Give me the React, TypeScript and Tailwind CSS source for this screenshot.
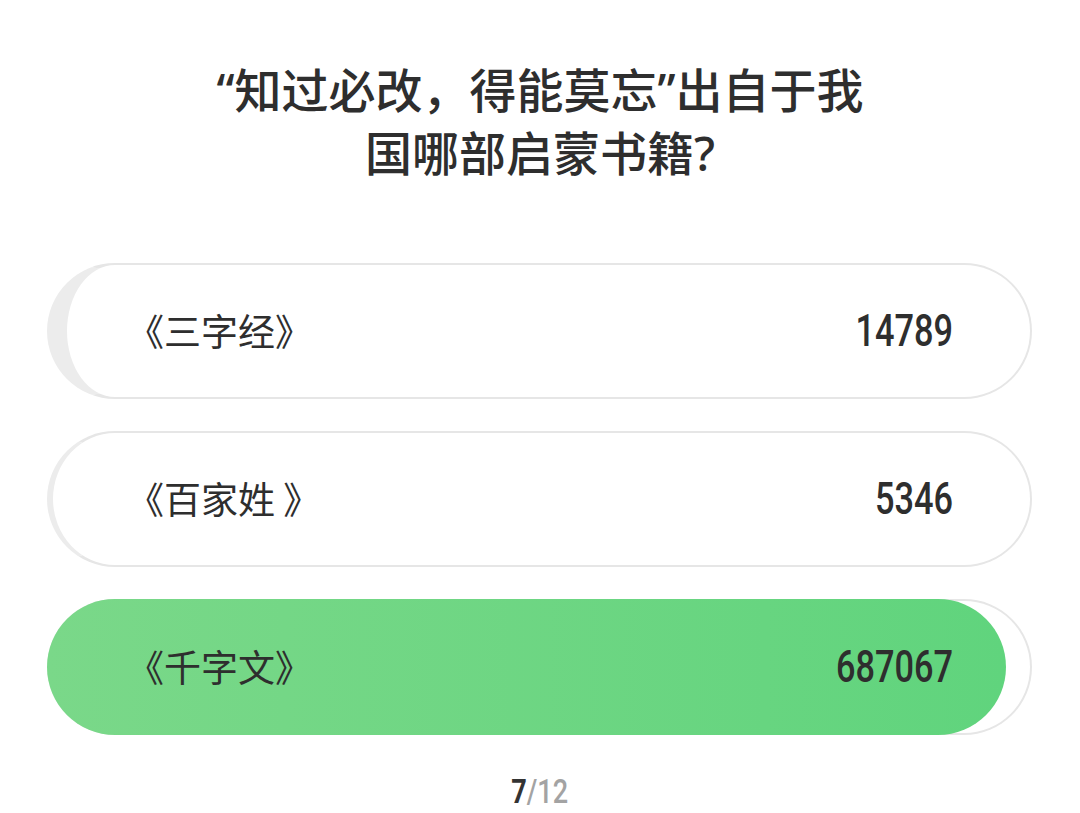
const options = [
  { label: '《三字经》', count: '14789', edge: 'border-l-[20px]', win: false },
  { label: '《百家姓 》', count: '5346', edge: 'border-l-[6px]', win: false },
  { label: '《千字文》', count: '687067', edge: 'border-l-2', win: true },
];

const cjk = { fontFamily: '"Noto Sans CJK SC", "Noto Sans", sans-serif' };
const title = { fontFamily: '"Noto Sans", "Noto Sans CJK SC", sans-serif' };
const num = { fontFamily: 'Roboto, "Liberation Sans", sans-serif' };

const Option = ({ label, count, edge, win }: { label: string; count: string; edge: string; win: boolean }) => (
  <div className="relative h-[136px] w-full">
    <div className={`absolute inset-0 rounded-full border-2 border-[#e6e6e6] border-l-[#ececec] bg-white ${edge}`} />
    {win && (
      <div className="absolute inset-y-0 left-0 w-[97.4%] rounded-full bg-linear-to-r from-[#7ad889] to-[#60d47d]" />
    )}
    <div className="relative flex h-full items-center justify-between pl-[80px] pr-[79px]">
      <span className="text-[37px] text-[#2e2e2e]" style={cjk}>{label}</span>
      <span className="origin-right scale-x-[0.78] text-[44px] font-medium leading-none text-[#2e2e2e]" style={num}>
        {count}
      </span>
    </div>
  </div>
);

export default function App() {
  return (
    <div className="flex h-[813px] w-[1080px] flex-col items-center overflow-hidden bg-white">
      <h1 className="pt-[59px] text-center text-[47px] font-medium leading-[63px] text-[#2e2e2e]" style={title}>
        “知过必改，得能莫忘”出自于我
        <br />
        国哪部启蒙书籍?
      </h1>
      <div className="mt-[78px] flex w-full flex-col gap-[32px] pl-[47px] pr-[48px]">
        {options.map((o) => (
          <Option key={o.count} {...o} />
        ))}
      </div>
      <div className="mt-[42px] scale-x-[0.82] text-[33px] font-medium leading-[30px]" style={num}>
        <span className="font-bold text-[#333]">7</span>
        <span className="text-[#a3a3a3]">/12</span>
      </div>
    </div>
  );
}
